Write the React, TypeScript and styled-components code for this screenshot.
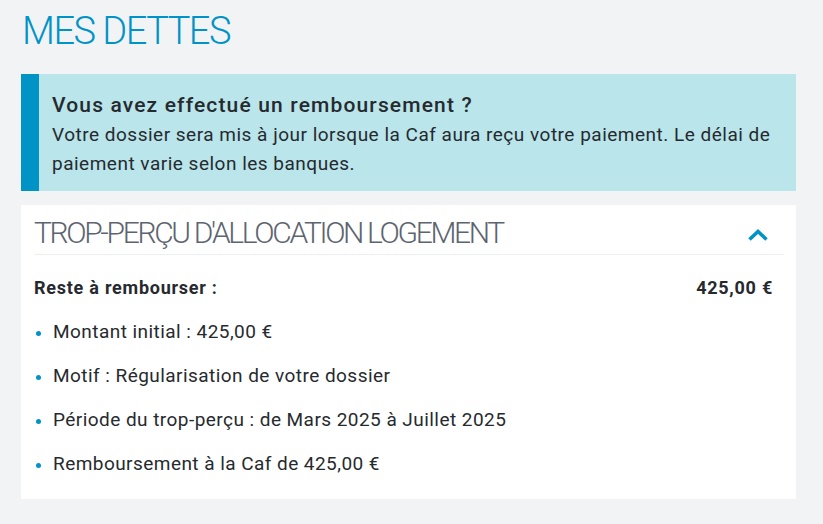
import React from "react";
import styled, { createGlobalStyle } from "styled-components";

const Global = createGlobalStyle`
  html, body { margin: 0; padding: 0; background: #f2f3f5; }
  body { font-family: Roboto, "Liberation Sans", sans-serif; color: #262a2e; }
`;

const Page = styled.div`
  padding: 0 27px 0 21px;
`;

const PageTitle = styled.h1`
  margin: 0;
  padding: 9px 0 0 1px;
  height: 74px;
  box-sizing: border-box;
  font-size: 38px;
  font-weight: 300;
  line-height: 44px;
  color: #0093c7;
  letter-spacing: -1.5px;
`;

const Notice = styled.div`
  display: flex;
  background: #b9e5eb;
  border-left: 18px solid #0093c6;
  padding: 17px 20px 13px 13px;
`;

const NoticeBody = styled.div`
  display: flex;
  flex-direction: column;
`;

const NoticeTitle = styled.div`
  font-size: 21px;
  font-weight: 500;
  line-height: 29px;
  letter-spacing: 1.15px;
  color: #262a2e;
`;

const NoticeText = styled.div`
  font-size: 19px;
  line-height: 29px;
  letter-spacing: 0.5px;
  color: #262a2e;
`;

const Card = styled.section`
  margin-top: 14px;
  background: #fff;
  padding: 0 12px 13px 13px;
`;

const CardHeader = styled.div`
  display: flex;
  align-items: flex-start;
  justify-content: space-between;
  height: 49px;
  border-bottom: 1px solid #eceef0;
`;

const CardTitle = styled.h2`
  margin: 0;
  padding-top: 10px;
  font-size: 30px;
  line-height: 36px;
  font-weight: 300;
  color: #5d6470;
  letter-spacing: -2.35px;
`;

const Toggle = styled.button`
  border: 0;
  background: none;
  padding: 0;
  margin: 23px 15px 0 0;
  width: 22px;
  height: 14px;
  display: flex;
  color: #0093c6;
  cursor: pointer;
`;

const CardContent = styled.div`
  padding: 0 11px 0 0;
`;

const Row = styled.div`
  display: flex;
  justify-content: space-between;
  align-items: baseline;
  padding-top: 23px;
  font-size: 18px;
  font-weight: 700;
  line-height: 20px;
  letter-spacing: 0.75px;
  color: #262a2e;
`;

const List = styled.ul`
  list-style: none;
  margin: 0;
  padding: 12px 0 0 0;
`;

const Item = styled.li`
  position: relative;
  padding-left: 19px;
  font-size: 19px;
  line-height: 44px;
  letter-spacing: 0.45px;
  color: #262a2e;
  &::before {
    content: "";
    position: absolute;
    left: 2px;
    top: 21px;
    width: 5px;
    height: 5px;
    border-radius: 50%;
    background: #0093c6;
  }
`;

const Chevron = () => (
  <svg width="22" height="14" viewBox="0 0 22 14" fill="none">
    <path d="M2.5 11.5 L11 3.5 L19.5 11.5" stroke="currentColor" strokeWidth="3.6" />
  </svg>
);

export default function App() {
  const items = [
    "Montant initial : 425,00 €",
    "Motif : Régularisation de votre dossier",
    "Période du trop-perçu : de Mars 2025 à Juillet 2025",
    "Remboursement à la Caf de 425,00 €",
  ];
  return (
    <>
      <Global />
      <Page>
        <PageTitle>MES DETTES</PageTitle>
        <Notice>
          <NoticeBody>
            <NoticeTitle>Vous avez effectué un remboursement ?</NoticeTitle>
            <NoticeText>
              Votre dossier sera mis à jour lorsque la Caf aura reçu votre paiement. Le délai de paiement varie selon les banques.
            </NoticeText>
          </NoticeBody>
        </Notice>
        <Card>
          <CardHeader>
            <CardTitle>TROP-PERÇU D'ALLOCATION LOGEMENT</CardTitle>
            <Toggle aria-label="Replier">
              <Chevron />
            </Toggle>
          </CardHeader>
          <CardContent>
            <Row>
              <span>Reste à rembourser :</span>
              <span>425,00 €</span>
            </Row>
            <List>
              {items.map((t) => (
                <Item key={t}>{t}</Item>
              ))}
            </List>
          </CardContent>
        </Card>
      </Page>
    </>
  );
}
